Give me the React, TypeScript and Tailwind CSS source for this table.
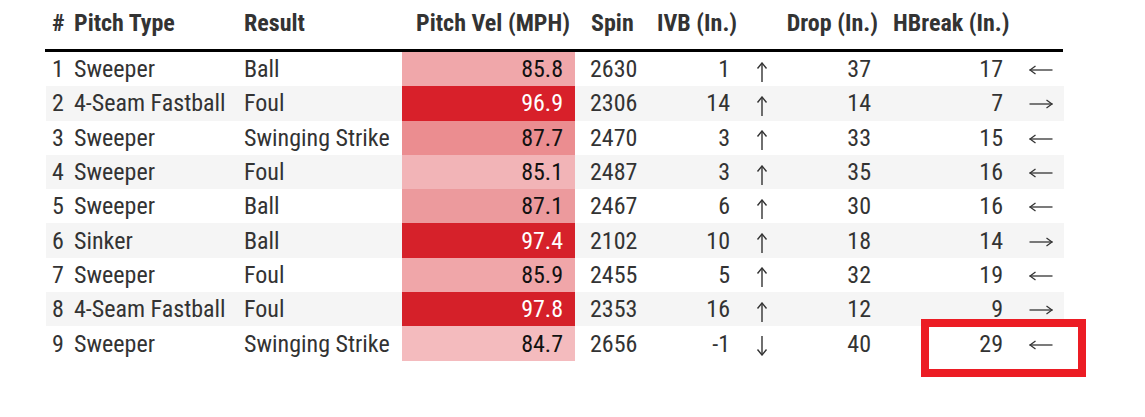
import React from "react";

type Dir = "up" | "down" | "left" | "right";

type Row = {
  n: number;
  type: string;
  result: string;
  vel: string;
  velBg: string;
  dark: boolean;
  spin: string;
  ivb: string;
  ivbArrow: Dir;
  drop: string;
  hb: string;
  hbArrow: Dir;
};

const rows: Row[] = [
  { n: 1, type: "Sweeper", result: "Ball", vel: "85.8", velBg: "#f0a7aa", dark: false, spin: "2630", ivb: "1", ivbArrow: "up", drop: "37", hb: "17", hbArrow: "left" },
  { n: 2, type: "4-Seam Fastball", result: "Foul", vel: "96.9", velBg: "#d8202a", dark: true, spin: "2306", ivb: "14", ivbArrow: "up", drop: "14", hb: "7", hbArrow: "right" },
  { n: 3, type: "Sweeper", result: "Swinging Strike", vel: "87.7", velBg: "#eb8d90", dark: false, spin: "2470", ivb: "3", ivbArrow: "up", drop: "33", hb: "15", hbArrow: "left" },
  { n: 4, type: "Sweeper", result: "Foul", vel: "85.1", velBg: "#f2b4b7", dark: false, spin: "2487", ivb: "3", ivbArrow: "up", drop: "35", hb: "16", hbArrow: "left" },
  { n: 5, type: "Sweeper", result: "Ball", vel: "87.1", velBg: "#ec9a9d", dark: false, spin: "2467", ivb: "6", ivbArrow: "up", drop: "30", hb: "16", hbArrow: "left" },
  { n: 6, type: "Sinker", result: "Ball", vel: "97.4", velBg: "#d6212a", dark: true, spin: "2102", ivb: "10", ivbArrow: "up", drop: "18", hb: "14", hbArrow: "right" },
  { n: 7, type: "Sweeper", result: "Foul", vel: "85.9", velBg: "#f0a6a9", dark: false, spin: "2455", ivb: "5", ivbArrow: "up", drop: "32", hb: "19", hbArrow: "left" },
  { n: 8, type: "4-Seam Fastball", result: "Foul", vel: "97.8", velBg: "#d52029", dark: true, spin: "2353", ivb: "16", ivbArrow: "up", drop: "12", hb: "9", hbArrow: "right" },
  { n: 9, type: "Sweeper", result: "Swinging Strike", vel: "84.7", velBg: "#f4bbbe", dark: false, spin: "2656", ivb: "-1", ivbArrow: "down", drop: "40", hb: "29", hbArrow: "left" },
];

function Arrow({ dir }: { dir: Dir }) {
  if (dir === "up" || dir === "down") {
    const up = dir === "up";
    return (
      <svg width="12" height="20" viewBox="0 0 12 20" className="mt-[5px]" fill="none" stroke="#333333" strokeWidth="1.4">
        {up ? (
          <>
            <line x1="6" y1="1" x2="6" y2="20" />
            <polyline points="1.5,6.5 6,1 10.5,6.5" />
          </>
        ) : (
          <>
            <line x1="6" y1="0" x2="6" y2="19" />
            <polyline points="1.5,13.5 6,19 10.5,13.5" />
          </>
        )}
      </svg>
    );
  }
  const left = dir === "left";
  return (
    <svg width="24" height="10" viewBox="0 0 24 10" className="mt-[2px]" fill="none" stroke="#333333" strokeWidth="1.3">
      <line x1="0.5" y1="5" x2="23.5" y2="5" />
      {left ? <polyline points="6.5,1 1,5 6.5,9" /> : <polyline points="17.5,1 23,5 17.5,9" />}
    </svg>
  );
}

const grid =
  "grid grid-cols-[24px_170px_162px_173px_70px_97px_38px_105px_130px_49px]";

export default function App() {
  return (
    <div
      className="relative w-[1145px] h-[417px] bg-white text-[#333333]"
      style={{ fontFamily: '"Roboto Condensed", Roboto, "Liberation Sans", sans-serif' }}
    >
      <div className="absolute left-0 top-0 w-full">
        <div className="pl-[46px] w-[1064px]">
          <div
            className={`${grid} h-[49px] items-center text-[24px] leading-none font-bold pb-[4px]`}
          >
            <div className="pl-[6px]">#</div>
            <div className="pl-[4px] whitespace-nowrap">Pitch Type</div>
            <div className="pl-[4px]">Result</div>
            <div className="text-right pr-[5px] whitespace-nowrap">Pitch Vel (MPH)</div>
            <div className="pl-[16px]">Spin</div>
            <div className="pl-[12px] whitespace-nowrap">IVB (In.)</div>
            <div></div>
            <div className="text-right pr-[7px] whitespace-nowrap">Drop (In.)</div>
            <div className="pl-[8px] whitespace-nowrap">HBreak (In.)</div>
            <div></div>
          </div>
          <div className="h-[3px] bg-black w-[1018px] -ml-[1px]"></div>
          {rows.map((r, i) => (
            <div
              key={r.n}
              className={`${grid} h-[34.3px] items-center text-[24px] leading-none ${
                i % 2 === 1 ? "bg-[#f5f5f5]" : "bg-white"
              }`}
            >
              <div className="pl-[6px]">{r.n}</div>
              <div className="pl-[4px] whitespace-nowrap">{r.type}</div>
              <div className="pl-[4px] whitespace-nowrap">{r.result}</div>
              <div
                className={`h-full flex items-center justify-end pr-[12px] ${
                  r.dark ? "text-white" : "text-[#111111]"
                }`}
                style={{ backgroundColor: r.velBg }}
              >
                {r.vel}
              </div>
              <div className="pl-[15px]">{r.spin}</div>
              <div className="text-right pr-[12px]">{r.ivb}</div>
              <div className="flex justify-center pl-[2px]">
                <Arrow dir={r.ivbArrow} />
              </div>
              <div className="text-right pr-[14px]">{r.drop}</div>
              <div className="text-right pr-[12px]">{r.hb}</div>
              <div className="flex justify-center pl-[2px]">
                <Arrow dir={r.hbArrow} />
              </div>
            </div>
          ))}
        </div>
      </div>
      <div className="absolute left-[921px] top-[319px] w-[165px] h-[58px] border-[8px] border-[#ec1c24]"></div>
    </div>
  );
}
